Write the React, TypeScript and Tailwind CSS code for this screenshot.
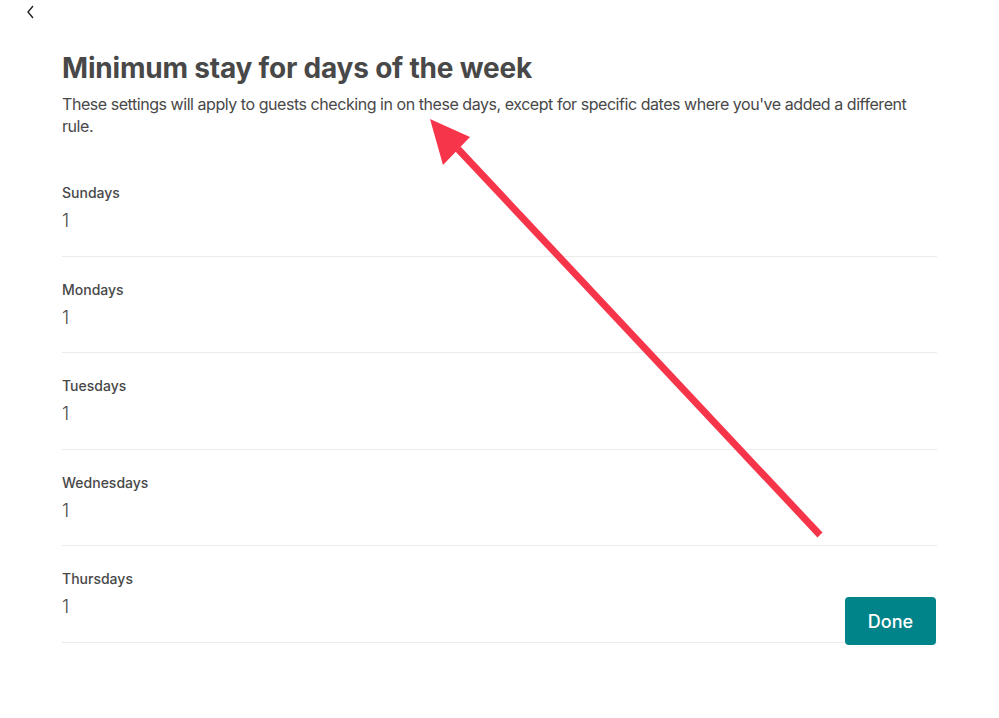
const DAYS = ["Sundays", "Mondays", "Tuesdays", "Wednesdays", "Thursdays"];

function Arrow() {
  return (
    <svg
      className="pointer-events-none absolute left-0 top-0"
      width="999"
      height="718"
      viewBox="0 0 999 718"
    >
      <line x1="820" y1="535" x2="458" y2="149" stroke="#f7354a" strokeWidth="7" />
      <polygon points="430,119 470,137 443,165" fill="#f7354a" />
    </svg>
  );
}

export default function App() {
  return (
    <div
      className="relative h-[718px] w-[999px] overflow-hidden bg-white text-[#484848]"
      style={{ fontFamily: "Inter, 'Noto Sans', sans-serif" }}
    >
      <div className="flex h-[24px] items-center pl-[25px]">
        <svg width="12" height="14" viewBox="0 0 12 14" fill="none">
          <path d="M8 1 L3 7 L8 13" stroke="#222" strokeWidth="1.4" />
        </svg>
      </div>

      <div className="mx-[62px] mt-[26px]">
        <h1 className="text-[28px] font-bold leading-[36px] tracking-[-0.2px]">
          Minimum stay for days of the week
        </h1>
        <p className="mt-[7px] text-[16px] leading-[22px] tracking-[-0.45px]">
          These settings will apply to guests checking in on these days, except for specific dates
          where you've added a different rule.
        </p>

        <div className="mt-[23px]">
          {DAYS.map((day, i) => (
            <div
              key={day}
              className={`border-b border-[#ebebeb] pt-[23px] ${i % 2 === 0 ? "pb-[23px]" : "pb-[22px]"}`}
            >
              <div className="text-[14px] font-medium leading-[20px]">{day}</div>
              <div className="mt-[6px] text-[18px] font-light leading-[24px]">1</div>
            </div>
          ))}
        </div>
      </div>

      <button className="absolute right-[63px] top-[597px] flex h-[48px] w-[91px] items-center justify-center rounded-[4px] bg-[#008489] text-[18px] font-medium text-white">
        Done
      </button>

      <Arrow />
    </div>
  );
}
